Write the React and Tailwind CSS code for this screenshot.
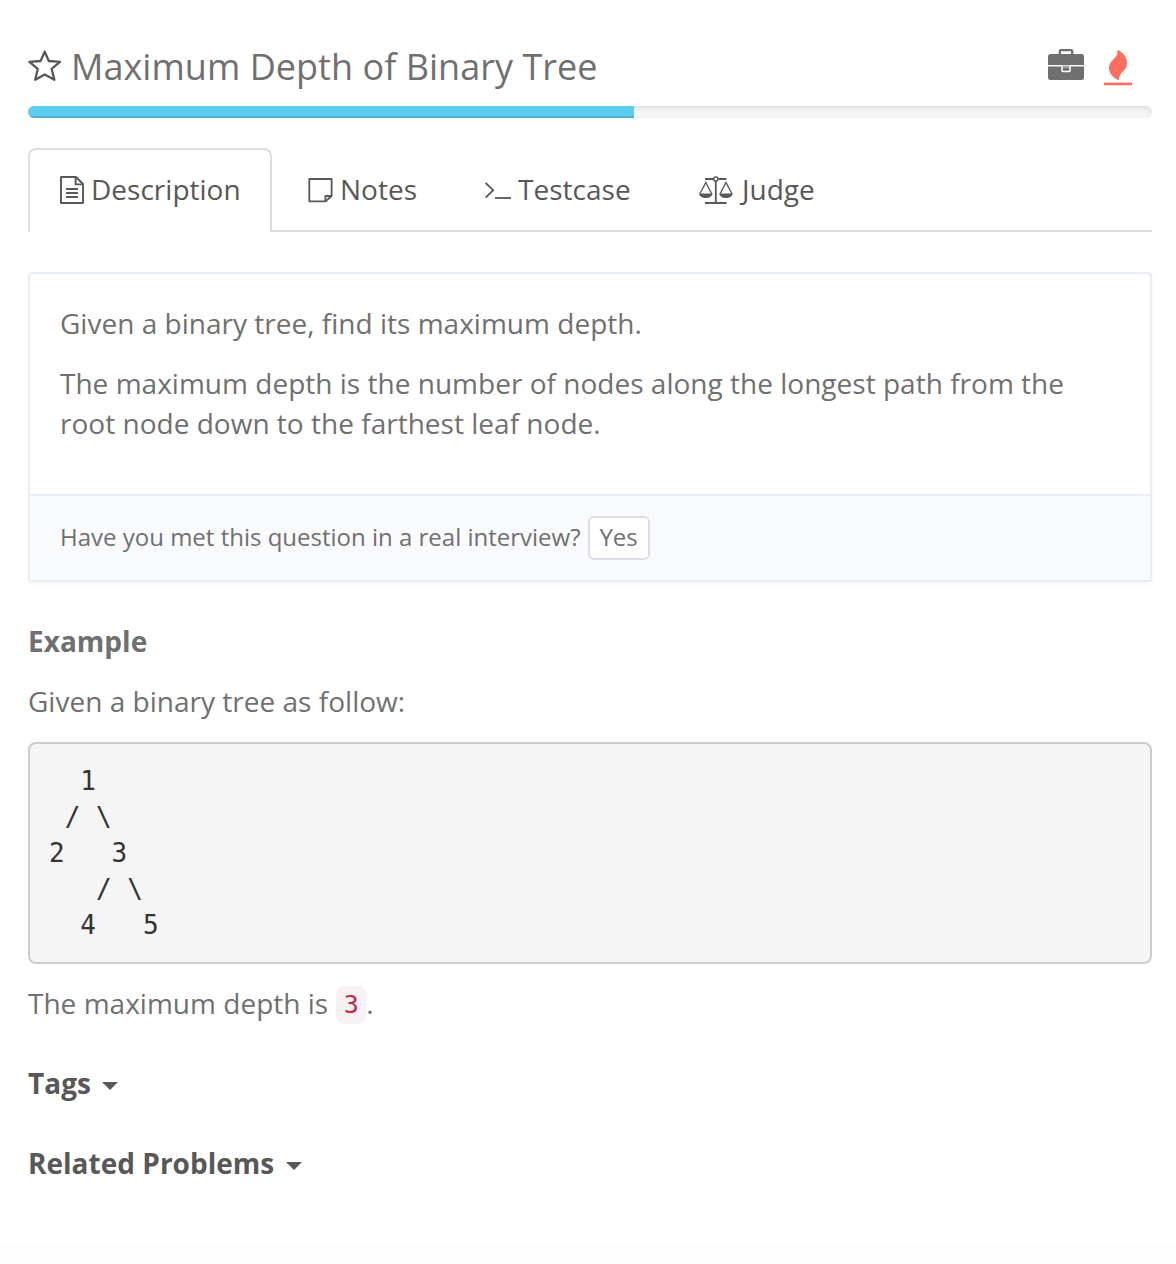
import React from "react";

const StarIcon = () => (
  <svg width="34" height="34" viewBox="0 0 34 34" fill="none" stroke="#585858" strokeWidth="2.3" strokeLinejoin="round" className="mb-[2px] shrink-0">
    <path d="M16.7 2.6 L20.8 12 L32 12.8 L23.6 19.8 L26.4 30.8 L16.7 25.4 L7.2 30.8 L9.8 19.8 L1.4 12.8 L12.6 12 Z" />
  </svg>
);

const BriefcaseIcon = () => (
  <svg width="38" height="32" viewBox="0 0 38 32" className="-ml-[0.5px] mr-[0.5px]">
    <path d="M12.8 7 V2.2 Q12.8 1.2 13.8 1.2 H24.2 Q25.2 1.2 25.2 2.2 V7" fill="none" stroke="#707070" strokeWidth="2.3" />
    <path d="M1 16 V7.5 Q1 5 3.5 5 H34.5 Q37 5 37 7.5 V16 Z" fill="#707070" />
    <path d="M1 17.5 H37 V28.5 Q37 31 34.5 31 H3.5 Q1 31 1 28.5 Z" fill="#707070" />
    <path d="M15 16.8 V21.4 Q15 22.5 16.1 22.5 H21.9 Q23 22.5 23 21.4 V16.8" fill="#707070" stroke="#fff" strokeWidth="1.5" />
    <path d="M16 18 H22" stroke="#fff" strokeWidth="0.8" />
  </svg>
);

const FlameIcon = () => (
  <svg width="28" height="36" viewBox="0 0 28 36" fill="#fd6e5e" className="mt-[1px] -mb-[1px]">
    <path d="M13.2 -0.6 C19 2.6 23.2 7.2 23 13.6 C22.8 21.6 14.5 22.2 15 30.3 C8.5 27.2 5 23.5 5 17.7 C5 9.2 15.8 8.2 13.2 -0.6 Z" />
    <rect x="0" y="32.6" width="28" height="2.6" />
  </svg>
);

const DocIcon = () => (
  <svg width="24" height="28" viewBox="0 0 24 28" fill="none" stroke="#585858" strokeWidth="1.9" strokeLinejoin="round" className="shrink-0">
    <path d="M16 1 H1 V27 H23 V8 Z" />
    <path d="M15.6 1 V8.4 H23" />
    <path d="M6 13 H18 M6 17 H18 M6 21 H18" />
  </svg>
);

const NoteIcon = () => (
  <svg width="25" height="25" viewBox="0 0 25 25" fill="none" stroke="#585858" strokeWidth="1.8" strokeLinejoin="round" className="mt-[2px] shrink-0">
    <path d="M1.3 1 H23.6 V18 L17.6 23.4 H1.3 Z" />
    <path d="M17.4 23.4 V18 H23.6" />
  </svg>
);

const TerminalIcon = () => (
  <svg width="27" height="18" viewBox="0 0 27 18" fill="none" stroke="#585858" strokeWidth="1.8">
    <path d="M1.6 1 L9.2 8.2 L1.6 15.6" />
    <path d="M11 16 H27" />
  </svg>
);

const ScalesIcon = () => (
  <svg width="34" height="29" viewBox="0 0 34 29" fill="none" stroke="#585858" strokeWidth="1.8" className="mt-[2px] shrink-0">
    <path d="M6 3 H14.5 M19.5 3 H27.5 M16.8 5.5 V27 M6 27 H27.5" />
    <circle cx="16.8" cy="3" r="2.1" strokeWidth="1.5" />
    <path d="M0.8 18 L6.8 6.5 L12.8 18 M21 18 L27 6.5 L33 18" strokeWidth="1.3" />
    <path d="M0 17.4 H13.6 C12.6 23.6 1 23.6 0 17.4 Z M20.2 17.4 H33.8 C32.8 23.6 21.2 23.6 20.2 17.4 Z" fill="#585858" stroke="none" />
  </svg>
);

const Caret = () => (
  <svg width="16" height="8" viewBox="0 0 16 8" fill="#585858" className="mt-[5px]">
    <path d="M0 0 H16 L8 8 Z" />
  </svg>
);

const tree = `  1
 / \\
2   3
   / \\
  4   5`;

export default function App() {
  return (
    <div className="flex min-h-[1264px] w-[1176px] flex-col bg-white pl-[28px] pr-[24px] pt-[42px] font-['Open_Sans',sans-serif] text-[28px] leading-[40px] tracking-[0.015px] text-[#707070]">
      <header className="flex h-[50px] items-center">
        <StarIcon />
        <h1 className="ml-[9px] text-[36px] font-normal leading-[50px] tracking-[0.03px] whitespace-nowrap">Maximum Depth of Binary Tree</h1>
        <div className="ml-auto mr-[20px] flex items-start gap-[19px]">
          <BriefcaseIcon />
          <FlameIcon />
        </div>
      </header>

      <div className="mt-[14px] h-[12px] overflow-hidden rounded-[8px] bg-[#f5f5f5] shadow-[inset_0_2px_4px_rgba(0,0,0,0.1)]">
        <div className="h-full w-[606px] bg-[#5bcdf1] shadow-[inset_0_-2px_0_rgba(0,0,0,0.15)]" />
      </div>

      <nav className="mt-[30px] flex h-[84px] text-[#585858]">
        <div className="flex w-[244px] items-center rounded-t-[8px] border-2 border-b-0 border-[#ddd] pb-[2px] pl-[30px]">
          <DocIcon />
          <span className="ml-[7px] pb-[2px]">Description</span>
        </div>
        <div className="flex flex-1 items-center border-b-2 border-[#ddd]">
          <div className="flex w-[176px] items-center pl-[36px]">
            <NoteIcon />
            <span className="ml-[7px]">Notes</span>
          </div>
          <div className="flex w-[215px] items-center pl-[36px]">
            <div className="pt-[4px]"><TerminalIcon /></div>
            <span className="ml-[7px]">Testcase</span>
          </div>
          <div className="flex items-center pl-[36px]">
            <ScalesIcon />
            <span className="ml-[9px]">Judge</span>
          </div>
        </div>
      </nav>

      <section className="mt-[40px] rounded-[4px] border-2 border-[#e9eef5] shadow-[0_2px_4px_rgba(0,0,0,0.04)]">
        <div className="px-[30px] pb-[51px] pt-[29px]">
          <p>Given a binary tree, find its maximum depth.</p>
          <p className="mt-[20px]">
            The maximum depth is the number of nodes along the longest path from the<br />root node down to the farthest leaf node.
          </p>
        </div>
        <div className="flex h-[86px] items-center border-t-2 border-[#e9eef5] bg-[#f9fafc] px-[30px] text-[24px] tracking-normal">
          <span className="pb-[2px]">Have you met this question in a real interview?</span>
          <button className="ml-[7px] flex h-[44px] w-[62px] items-center justify-center rounded-[6px] border-2 border-[#dcdde9] bg-white pb-[2px]">Yes</button>
        </div>
      </section>

      <h2 className="mt-[39px] font-bold">Example</h2>
      <p className="mt-[20px]">Given a binary tree as follow:</p>
      <pre className="mt-[21px] rounded-[8px] border-2 border-[#ccc] bg-[#f5f5f5] p-[19px] font-['DejaVu_Sans_Mono',monospace] text-[26px] leading-[36px] tracking-normal text-[#333]">{tree}</pre>
      <p className="mt-[19px] flex h-[40px] items-center">
        <span>The maximum depth is</span>
        <code className="ml-[8px] mt-[4px] flex h-[38px] w-[30px] items-center justify-center rounded-[8px] bg-[#f9f2f4] font-['DejaVu_Sans_Mono',monospace] text-[25px] text-[#c7254e]">3</code>
        <span>.</span>
      </p>
      <h2 className="mt-[40px] flex items-center gap-[11px] font-bold text-[#585858]">Tags <Caret /></h2>
      <h2 className="mt-[40px] flex items-center gap-[12px] font-bold text-[#585858]">Related Problems <Caret /></h2>
      <div className="-ml-[28px] -mr-[24px] mt-auto h-[20px] bg-[#fdfdfd]" />
    </div>
  );
}
